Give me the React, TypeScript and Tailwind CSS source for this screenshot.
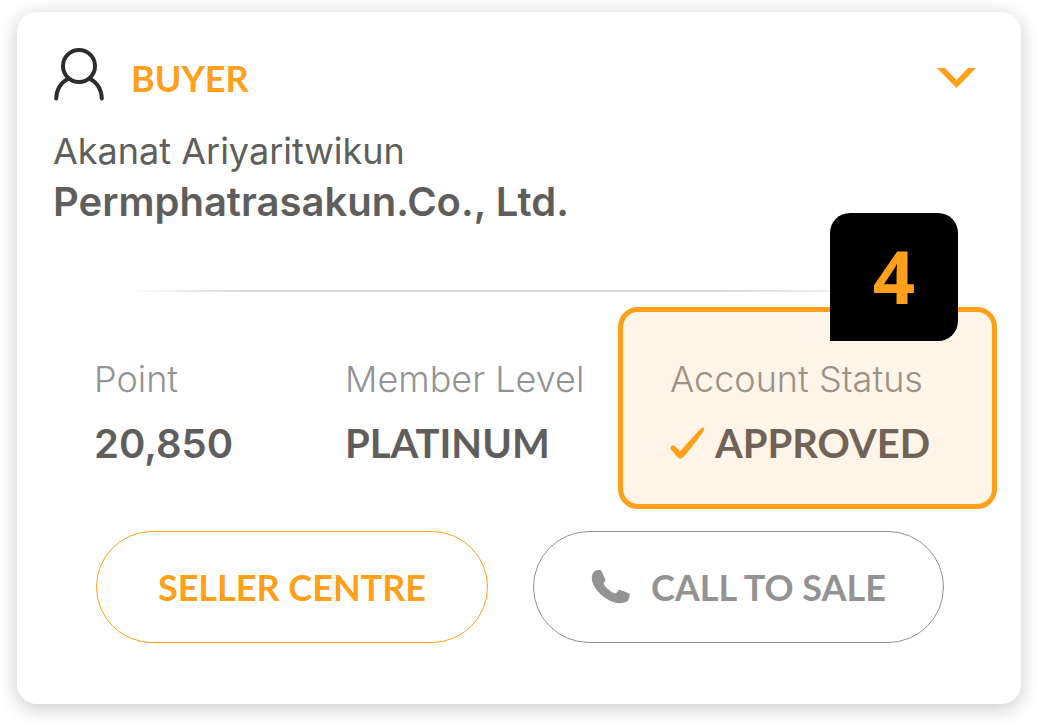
import type { ReactNode } from 'react';

function UserIcon() {
  return (
    <svg className="h-[54px] w-[52px] shrink-0 self-start" viewBox="0 0 52 54" fill="none" stroke="#2d2d2d" strokeWidth="4" aria-hidden="true">
      <circle cx="26" cy="18" r="16" />
      <path strokeLinecap="round" d="M3.200 50.500C3.500 42 8 34.500 15.500 30.500M48.800 50.500C48.500 42 44 34.500 36.500 30.500" />
    </svg>
  );
}

function CheckIcon() {
  return (
    <svg className="h-8 w-9 shrink-0" viewBox="0 0 36 32" fill="#ff9f1a" aria-hidden="true">
      <path d="M.8 22.500C-.4 20.300 1.300 18 3.800 18.600C5.500 19 7.500 22 10 24.200C12 23 24 8 31.300 1C33-.5 35 1 34 3.200C29 11 19 24.500 12.800 30.500C11 32 9 31.800 7.500 30Z" />
    </svg>
  );
}

function PhoneIcon() {
  return (
    <svg className="h-9 w-10 shrink-0" viewBox="0 0 40 36" fill="#939393" aria-hidden="true">
      <path d="M3.500 2.500C6 .8 9 .7 10.200 1.500L14.600 11C14.800 12 12.500 13.500 12.500 14.500C14 18 20 23.500 24.500 24.500C26 24 27 21 28.800 20.800L38.200 24.500C39.200 25.500 38.800 29 36.500 32C33 34.500 26 35.500 18.500 31.500C9 26.500 1.500 18 .8 10C.7 6.500 1.500 4 3.500 2.500Z" />
    </svg>
  );
}

function Stat({ label, children }: { label: string; children: ReactNode }) {
  return (
    <div className="pt-[50px] text-[#5f5e5c]">
      <dt className="font-['Inter',sans-serif] text-[36px] leading-[44px] font-light whitespace-nowrap text-[#939393]">{label}</dt>
      <dd className="mt-4 text-[40px] leading-[52px] font-bold whitespace-nowrap">{children}</dd>
    </div>
  );
}

export default function App() {
  return (
    <main className="bg-white px-[17px] pt-3 pb-[22px] font-['Lato',sans-serif]">
      <section className="rounded-[20px] bg-white pt-9 pb-[61px] shadow-[0_4px_20px_rgba(0,0,0,0.22)]">
        <header className="flex items-center pr-[45px] pl-9">
          <UserIcon />
          <h1 className="ml-[26px] text-[36px] leading-[60px] font-bold text-[#ff9f1a]">BUYER</h1>
          <button type="button" aria-label="Show details" className="ml-auto">
            <svg className="h-5 w-[39px]" viewBox="0 0 39 20" fill="#ff9f1a">
              <path d="M0 0H8L19.500 12L31 0H39L19.500 20Z" />
            </svg>
          </button>
        </header>

        <div className="mt-[21px] px-9 font-['Inter',sans-serif] text-[#5f5e5c]">
          <p className="text-[36px] leading-[44px]">Akanat Ariyaritwikun</p>
          <p className="text-[40px] leading-[58px] font-semibold">Permphatrasakun.Co., Ltd.</p>
        </div>

        <hr className="mx-[108px] mt-[59px] h-[2px] border-0 bg-[linear-gradient(to_right,transparent,#d8d8d8_15%,#d8d8d8_75%,transparent)]" />

        <dl className="mt-[15px] grid grid-cols-[251fr_273fr_379fr] pr-6 pl-[77px]">
          <Stat label="Point">
            <span className="font-['Inter',sans-serif] font-semibold">20,850</span>
          </Stat>
          <Stat label="Member Level">PLATINUM</Stat>
          <div className="relative rounded-[20px] border-5 border-[#ff9f1a] bg-[#fff4e8] pt-[45px] pb-[35px] pl-[47px]">
            <dt className="font-['Inter',sans-serif] text-[36px] leading-[44px] font-light whitespace-nowrap text-[#9c9184]">Account Status</dt>
            <dd className="mt-4 flex items-center gap-[9px] text-[40px] leading-[52px] font-bold text-[#706356]">
              <CheckIcon />
              APPROVED
            </dd>
            <span className="absolute -top-[99px] right-[34px] flex size-32 items-center justify-center rounded-[20px] rounded-bl-none bg-black pb-1 font-['Open_Sans',sans-serif] text-[74px] font-bold text-[#ff9f1a]">
              4
            </span>
          </div>
        </dl>

        <div className="mt-[22px] grid grid-cols-[392fr_411fr] gap-[45px] pr-[77px] pl-[79px] text-[36px] font-bold">
          <button type="button" className="h-28 rounded-full border border-[#ff9f1a] text-[#ff9f1a]">
            SELLER CENTRE
          </button>
          <button type="button" className="flex h-28 items-center justify-center gap-5 rounded-full border border-[#939393] text-[#939393]">
            <PhoneIcon />
            CALL TO SALE
          </button>
        </div>
      </section>
    </main>
  );
}
